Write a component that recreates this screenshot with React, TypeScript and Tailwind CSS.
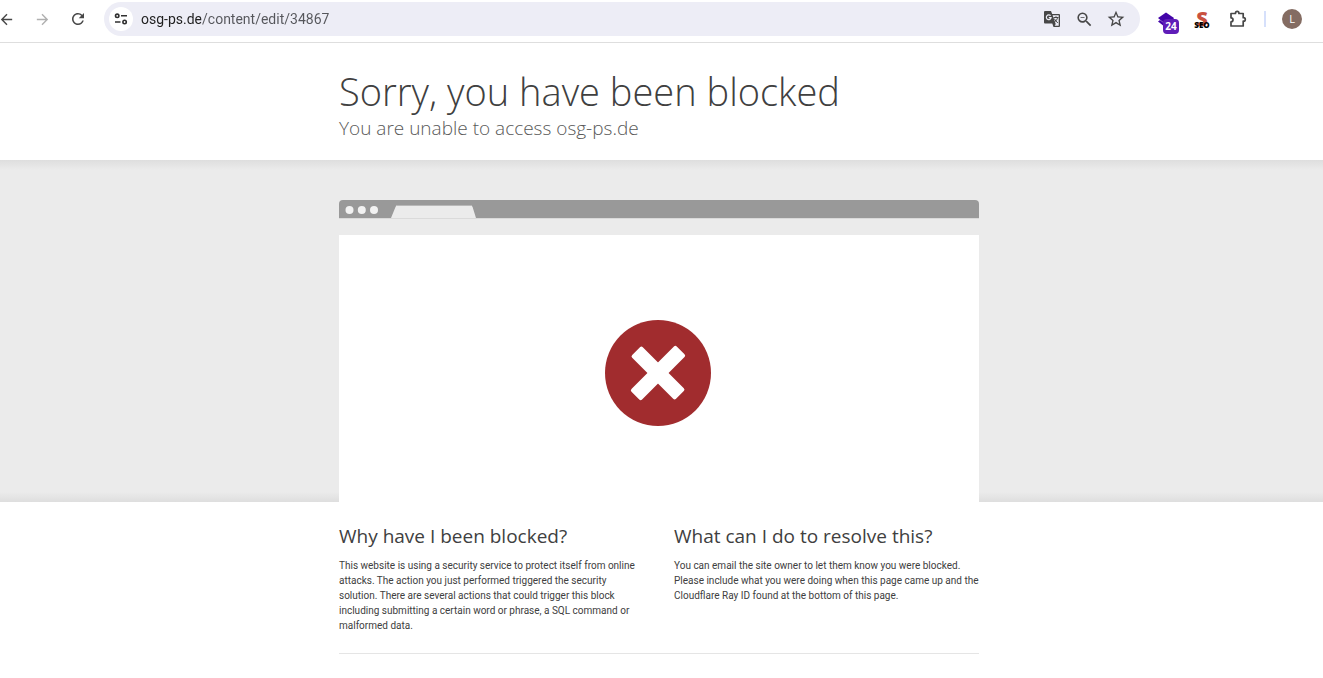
import { useState } from "react";
import type { ReactNode } from "react";
import { MdArrowBack, MdArrowForward, MdRefresh, MdStarBorder, MdZoomOut } from "react-icons/md";

const reasons = [
  {
    title: "Why have I been blocked?",
    lines: [
      "This website is using a security service to protect itself from online",
      "attacks. The action you just performed triggered the security",
      "solution. There are several actions that could trigger this block",
      "including submitting a certain word or phrase, a SQL command or",
      "malformed data.",
    ],
  },
  {
    title: "What can I do to resolve this?",
    lines: [
      "You can email the site owner to let them know you were blocked.",
      "Please include what you were doing when this page came up and the",
      "Cloudflare Ray ID found at the bottom of this page.",
    ],
  },
];

function IconButton({ label, children }: { label: string; children: ReactNode }) {
  return (
    <button type="button" aria-label={label} className="flex size-5 shrink-0 items-center justify-center">
      {children}
    </button>
  );
}

function TranslateIcon() {
  return (
    <svg width="18" height="18" viewBox="0 0 18 18" fill="none">
      <path d="M2 1h6l1.200 3H16q1 0 1 1v11q0 1-1 1h-5.500l-1.200-3.500H2q-1 0-1-1V2q0-1 1-1z" fill="#474747" />
      <path d="M9.600 5.300h6.100v10.400h-4l1-1.700z" fill="#ededf6" />
      <path d="M7.600 5.700a2.400 2.400 0 1 0 .5 2H5.800" stroke="#ededf6" strokeWidth="1.200" />
      <path d="M10.500 7.500h5M13 6.300v1.200M14.600 7.500c-.4 2-1.600 3.600-3.300 4.800M11.300 8.600c.8 1.800 2 3.200 3.600 4.200" stroke="#474747" />
    </svg>
  );
}

function PuzzleIcon() {
  return (
    <svg width="18" height="18" viewBox="0 0 18 18" fill="none" stroke="#474747" strokeWidth="1.700" strokeLinejoin="round">
      <path d="M2 3.500h4.500V3a1.700 1.700 0 0 1 3.400 0v.5h4.300v4.200h.4a1.700 1.700 0 0 1 0 3.400h-.4V16H2v-4.200a2 2 0 0 0 0-4z" />
    </svg>
  );
}

function Toolbar() {
  const [url, setUrl] = useState("osg-ps.de/content/edit/34867");

  return (
    <div className="flex h-[43px] items-center border-b border-[#dedede] bg-white pr-[21px] pb-1 text-[#474747]">
      {/* Navigation */}
      <div className="-ml-1 flex items-center gap-4">
        <IconButton label="Back"><MdArrowBack size={17} /></IconButton>
        <IconButton label="Forward"><MdArrowForward size={17} className="text-[#b0b0b0]" /></IconButton>
        <IconButton label="Reload"><MdRefresh size={18} /></IconButton>
      </div>

      {/* Address bar */}
      <div className="ml-4 flex h-[34px] flex-1 items-center rounded-full bg-[#ededf6] pr-3.5 pl-[5px]">
        <button
          type="button"
          aria-label="View site information"
          className="flex size-6 shrink-0 items-center justify-center rounded-full bg-white"
        >
          <svg width="14" height="12" viewBox="0 0 14 12" fill="none" stroke="#303030" strokeWidth="1.6">
            <circle cx="3.2" cy="2.8" r="1.7" />
            <path d="M7 2.8h6M1 9h5.5" />
            <circle cx="10.6" cy="9" r="1.7" />
          </svg>
        </button>
        <input
          type="text"
          aria-label="Address"
          value={url}
          onChange={(e) => setUrl(e.target.value)}
          className="ml-2 min-w-0 flex-1 bg-linear-to-r from-[#1f1f1f] from-[60px] to-[#55565b] to-[60px] bg-clip-text font-['Roboto',sans-serif] text-sm text-transparent outline-none"
        />
        <div className="flex items-center gap-3">
          <IconButton label="Translate this page"><TranslateIcon /></IconButton>
          <IconButton label="Zoom"><MdZoomOut size={19} /></IconButton>
          <IconButton label="Bookmark this tab"><MdStarBorder size={20} /></IconButton>
        </div>
      </div>

      {/* Extensions */}
      <div className="ml-4 flex items-center">
        <button type="button" aria-label="Layers extension, 24" className="relative size-6">
          <svg width="20" height="20" viewBox="0 0 20 20" fill="#4305a8">
            <path d="M10 3.500 18 9l-3 5H8L2 9z" />
            <path d="M2 12.500 4 11l5 4v3z" />
          </svg>
          <span className="absolute top-3 left-[7px] flex h-[15px] w-4 items-center justify-center rounded-sm bg-[#5f1db8] text-[10px] font-bold text-white">
            24
          </span>
        </button>
        <button type="button" aria-label="SEO extension" className="relative ml-3 flex h-5 w-5 items-center justify-center">
          <span className="text-xl leading-5 font-extrabold text-[#c9513f]">S</span>
          <span className="absolute top-3 text-[8px] leading-2 font-extrabold text-black">SEO</span>
        </button>
        <span className="ml-4"><IconButton label="Extensions"><PuzzleIcon /></IconButton></span>
        <span className="ml-4 h-4 w-0.5 bg-[#d6e0fb]" />
        <button
          type="button"
          aria-label="Profile"
          className="ml-4 flex size-5 items-center justify-center rounded-full bg-[#846c62] text-[11px] text-white"
        >
          L
        </button>
      </div>
    </div>
  );
}

function BlockedWindow() {
  return (
    <div className="mx-auto w-full max-w-[640px]">
      <svg className="block w-full" viewBox="0 0 640 19">
        <path d="M0 18V4a4 4 0 0 1 4-4h632a4 4 0 0 1 4 4v14z" fill="#999" />
        <path d="M52 18 56.500 7q.6-2 2.500-2h72q2 0 2.600 2l3.400 11z" fill="#ebebeb" />
        <path d="M58 5.500h75" stroke="#b8b8b8" />
        <path d="M0 18.500h640" stroke="#dadada" />
        <circle cx="10.500" cy="10" r="4" fill="#f2f2f2" />
        <circle cx="22.800" cy="10" r="4" fill="#f2f2f2" />
        <circle cx="35" cy="10" r="4" fill="#f2f2f2" />
      </svg>
      <div className="mt-4 flex h-[267px] items-center justify-center bg-white">
        <svg width="108" height="108" viewBox="0 0 108 108" className="mt-1.5">
          <circle cx="53" cy="55" r="53" fill="#a12c2e" />
          <g fill="#fff" transform="translate(53 55)">
            <rect x="-7.500" y="-32" width="15" height="64" rx="2" transform="rotate(45)" />
            <rect x="-7.500" y="-31" width="15" height="62" rx="2" transform="rotate(-45)" />
          </g>
        </svg>
      </div>
    </div>
  );
}

export default function App() {
  return (
    <div className="min-h-screen bg-white font-['Open_Sans',sans-serif] text-[#404040]">
      <Toolbar />

      <header className="pt-[22px] pr-[5px] pb-[22px]">
        <div className="mx-auto max-w-[640px]">
          <h1 className="text-[38px] leading-[53px] font-light whitespace-nowrap">Sorry, you have been blocked</h1>
          <h2 className="text-[19px] leading-5 font-light text-[#595959]">You are unable to access osg-ps.de</h2>
        </div>
      </header>

      <section className="bg-[linear-gradient(#dedede,#ebebeb_10px,#ebebeb_calc(100%-10px),#dedede)] pt-10 pr-[5px]">
        <BlockedWindow />
      </section>

      <main className="pr-[5px]">
        <div className="mx-auto grid max-w-[640px] grid-cols-2 gap-[30px] border-b border-[#e5e5e5] pt-5 pb-5">
          {reasons.map((reason) => (
            <section key={reason.title}>
              <h2 className="text-[19px] leading-7 whitespace-nowrap">{reason.title}</h2>
              <p className="mt-2 font-['Roboto',sans-serif] text-[10px] leading-[15px] whitespace-nowrap">
                {reason.lines.map((line) => (
                  <span key={line} className="block">{line}</span>
                ))}
              </p>
            </section>
          ))}
        </div>
      </main>
    </div>
  );
}
